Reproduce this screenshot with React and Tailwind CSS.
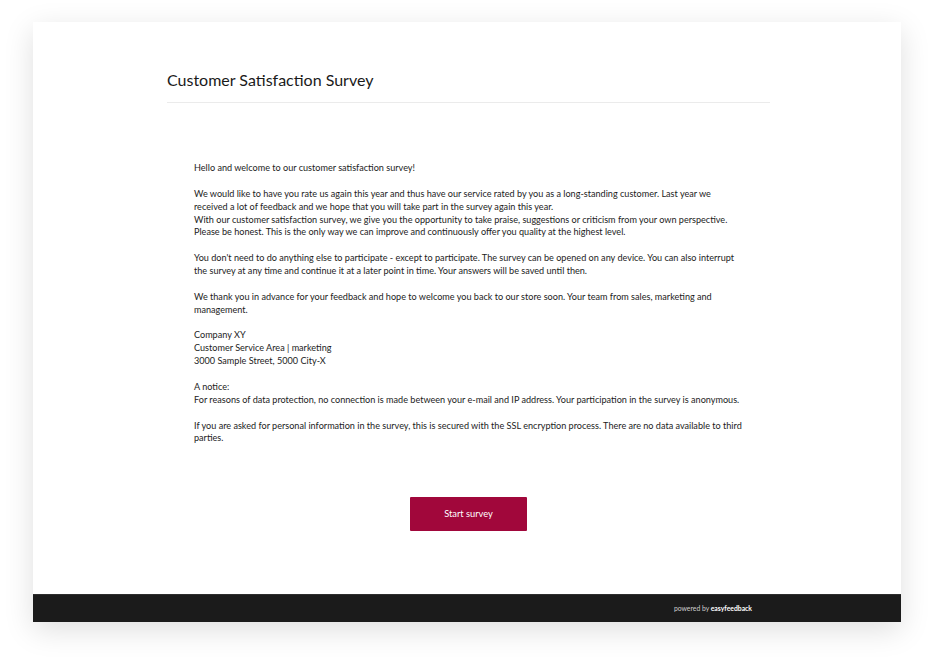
import React from 'react';

const Line = ({ children }) => <span className="block whitespace-nowrap">{children}</span>;

const App = () => {
    return (
        <div className="min-h-screen bg-white pt-[22px] px-[33px]" style={{ fontFamily: 'Lato, "Open Sans", sans-serif' }}>
            <div className="w-[868px] h-[600px] bg-white flex flex-col shadow-[0_8px_28px_rgba(0,0,0,0.13)]">
                <div className="flex-1 pl-[134px]">
                    <div className="w-[603px] pt-[47px]">
                        {/* Header */}
                        <h1 className="text-[16px] leading-[22px] text-[#1a1a1a] pb-[11px] border-b border-[#ebebeb]">
                            Customer Satisfaction Survey
                        </h1>

                        {/* Intro text */}
                        <div className="pl-[27px] pt-[59px] text-[9.1px] leading-[12.88px] text-[#1c1c1c]">
                            <p className="mb-[12.88px]"><Line>Hello and welcome to our customer satisfaction survey!</Line></p>
                            <p className="mb-[12.88px]">
                                <Line>We would like to have you rate us again this year and thus have our service rated by you as a long-standing customer. Last year we</Line>
                                <Line>received a lot of feedback and we hope that you will take part in the survey again this year.</Line>
                                <Line>With our customer satisfaction survey, we give you the opportunity to take praise, suggestions or criticism from your own perspective.</Line>
                                <Line>Please be honest. This is the only way we can improve and continuously offer you quality at the highest level.</Line>
                            </p>
                            <p className="mb-[12.88px]">
                                <Line>You don't need to do anything else to participate - except to participate. The survey can be opened on any device. You can also interrupt</Line>
                                <Line>the survey at any time and continue it at a later point in time. Your answers will be saved until then.</Line>
                            </p>
                            <p className="mb-[12.88px]">
                                <Line>We thank you in advance for your feedback and hope to welcome you back to our store soon. Your team from sales, marketing and</Line>
                                <Line>management.</Line>
                            </p>
                            <p className="mb-[12.88px]">
                                <Line>Company XY</Line>
                                <Line>Customer Service Area | marketing</Line>
                                <Line>3000 Sample Street, 5000 City-X</Line>
                            </p>
                            <p className="mb-[12.88px]">
                                <Line>A notice:</Line>
                                <Line>For reasons of data protection, no connection is made between your e-mail and IP address. Your participation in the survey is anonymous.</Line>
                            </p>
                            <p>
                                <Line>If you are asked for personal information in the survey, this is secured with the SSL encryption process. There are no data available to third</Line>
                                <Line>parties.</Line>
                            </p>
                        </div>

                        {/* Start button */}
                        <div className="flex justify-center pt-[52px]">
                            <button className="w-[117px] h-[34px] bg-[#a1073b] text-white text-[9.3px] rounded-[1px]">
                                Start survey
                            </button>
                        </div>
                    </div>
                </div>

                {/* Footer */}
                <div className="h-[28px] bg-[#1b1b1b] border-t border-[#2e2e2e] flex items-center justify-end pr-[149px]">
                    <span className="text-[6.8px] text-[#cfcfcf]">
                        powered by <span className="font-bold text-white">easyfeedback</span>
                    </span>
                </div>
            </div>
        </div>
    );
};

export default App;
